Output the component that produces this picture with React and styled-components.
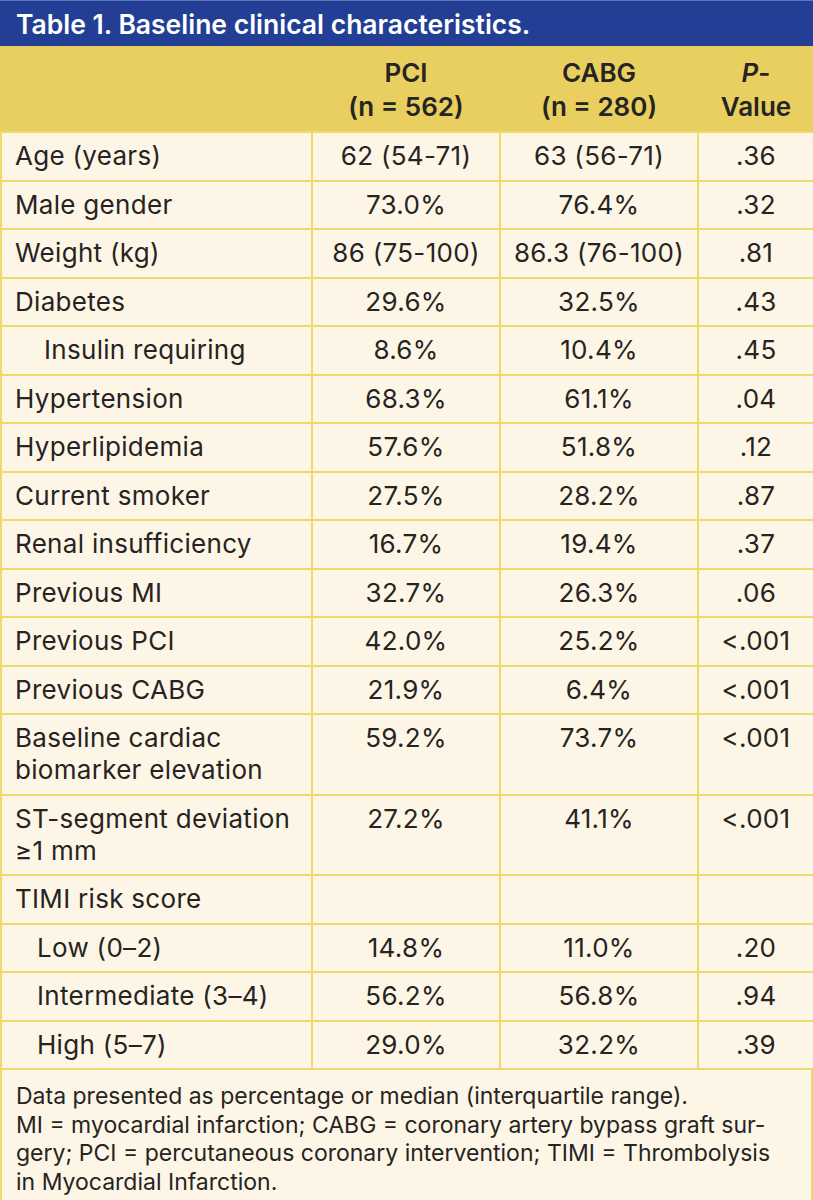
import React from "react";
import styled, { createGlobalStyle } from "styled-components";

const GlobalStyle = createGlobalStyle`
  html, body { margin: 0; padding: 0; background: #fdf6e6; }
  body { font-family: Inter, "Open Sans", "Liberation Sans", sans-serif; color: #262422; }
`;

const C = {
  blue: "#223f95",
  blueEdge: "#5d78bd",
  yellow: "#e9cf5f",
  line: "#eed96d",
  cream: "#fdf6e6",
  text: "#262422",
};

const Card = styled.div`
  width: 813px;
  background: ${C.cream};
`;

const TitleBar = styled.div`
  height: 45px;
  border-top: 1px solid ${C.blueEdge};
  background: ${C.blue};
  color: #fff;
  font-size: 26.5px;
  font-weight: 600;
  display: flex;
  align-items: center;
  padding: 0 16px;
`;

const Table = styled.table`
  width: 813px;
  border-collapse: collapse;
  table-layout: fixed;
`;

const HeadCell = styled.th`
  background: ${C.yellow};
  font-weight: 600;
  font-size: 26px;
  line-height: 34px;
  padding: 8px 4px 7px;
  text-align: center;
  vertical-align: bottom;
  color: ${C.text};
  border: 2px solid ${C.yellow};
  border-bottom-color: ${C.line};
`;

const Cell = styled.td`
  border: 2px solid ${C.line};
  background: ${C.cream};
  font-size: 26px;
  letter-spacing: 0.3px;
  line-height: 32px;
  padding: 7px ${(p) => (p.$label ? "8px" : "2px")} 7.5px
    ${(p) => (p.$indent ? `${p.$indent}px` : p.$label ? "13px" : "2px")};
  text-align: ${(p) => (p.$label ? "left" : "center")};
  vertical-align: top;
  color: ${C.text};
  white-space: ${(p) => (p.$label ? "normal" : "nowrap")};
`;

const Footnote = styled.div`
  border: 2px solid ${C.line};
  border-top: none;
  border-bottom-width: 3px;
  padding: 12px 8px 6px 14px;
  font-size: 23px;
  line-height: 28.5px;
  color: ${C.text};
`;

const NoteLine = styled.div`
  white-space: nowrap;
`;

const rows = [
  ["Age (years)", "62 (54-71)", "63 (56-71)", ".36"],
  ["Male gender", "73.0%", "76.4%", ".32"],
  ["Weight (kg)", "86 (75-100)", "86.3 (76-100)", ".81"],
  ["Diabetes", "29.6%", "32.5%", ".43"],
  ["Insulin requiring", "8.6%", "10.4%", ".45", 42],
  ["Hypertension", "68.3%", "61.1%", ".04"],
  ["Hyperlipidemia", "57.6%", "51.8%", ".12"],
  ["Current smoker", "27.5%", "28.2%", ".87"],
  ["Renal insufficiency", "16.7%", "19.4%", ".37"],
  ["Previous MI", "32.7%", "26.3%", ".06"],
  ["Previous PCI", "42.0%", "25.2%", "<.001"],
  ["Previous CABG", "21.9%", "6.4%", "<.001"],
  ["Baseline cardiac biomarker elevation", "59.2%", "73.7%", "<.001"],
  ["ST-segment deviation ≥1 mm", "27.2%", "41.1%", "<.001"],
  ["TIMI risk score", "", "", ""],
  ["Low (0–2)", "14.8%", "11.0%", ".20", 35],
  ["Intermediate (3–4)", "56.2%", "56.8%", ".94", 35],
  ["High (5–7)", "29.0%", "32.2%", ".39", 35],
];

export default function App() {
  return (
    <>
      <GlobalStyle />
      <Card>
        <TitleBar>Table 1. Baseline clinical characteristics.</TitleBar>
        <Table>
          <colgroup>
            <col style={{ width: 311 }} />
            <col style={{ width: 188 }} />
            <col style={{ width: 198 }} />
            <col style={{ width: 116 }} />
          </colgroup>
          <thead>
            <tr>
              <HeadCell />
              <HeadCell>
                PCI
                <br />
                (n = 562)
              </HeadCell>
              <HeadCell>
                CABG
                <br />
                (n = 280)
              </HeadCell>
              <HeadCell>
                <i>P</i>-
                <br />
                Value
              </HeadCell>
            </tr>
          </thead>
          <tbody>
            {rows.map(([label, a, b, p, indent]) => (
              <tr key={label}>
                <Cell $label $indent={indent}>
                  {label}
                </Cell>
                <Cell>{a}</Cell>
                <Cell>{b}</Cell>
                <Cell>{p}</Cell>
              </tr>
            ))}
          </tbody>
        </Table>
        <Footnote>
          <NoteLine>Data presented as percentage or median (interquartile range).</NoteLine>
          <NoteLine>MI = myocardial infarction; CABG = coronary artery bypass graft sur-</NoteLine>
          <NoteLine>gery; PCI = percutaneous coronary intervention; TIMI = Thrombolysis</NoteLine>
          <NoteLine>in Myocardial Infarction.</NoteLine>
        </Footnote>
      </Card>
    </>
  );
}
